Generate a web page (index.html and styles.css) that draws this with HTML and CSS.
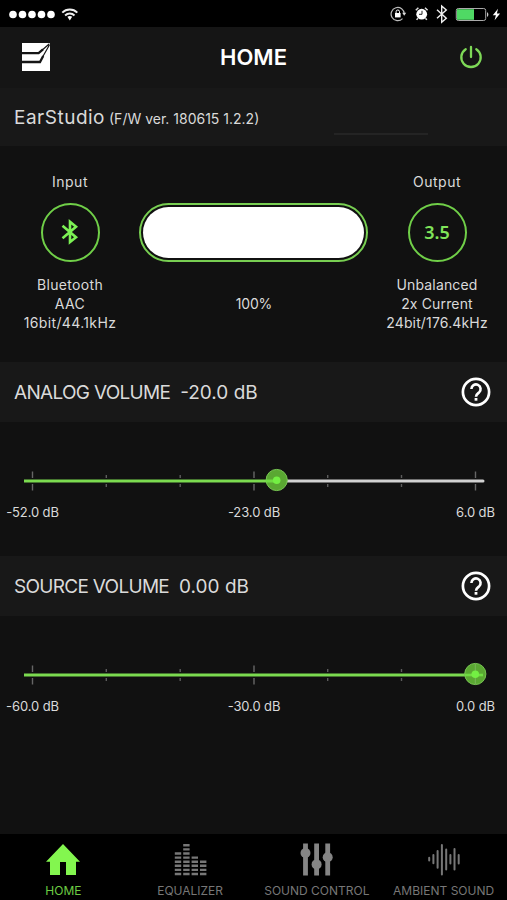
FILE: index.html
```html
<!DOCTYPE html>
<html lang="en">
<head>
  <meta charset="UTF-8">
  <title>EarStudio</title>
  <link rel="stylesheet" href="styles.css">
</head>
<body>
  <div class="status-bar">
    <svg width="72" height="27" viewBox="0 0 72 27">
      <g fill="#fff">
        <circle cx="6" cy="14.5" r="3.8"/>
        <circle cx="15.5" cy="14.5" r="3.8"/>
        <circle cx="25" cy="14.5" r="3.8"/>
        <circle cx="34.5" cy="14.5" r="3.8"/>
        <circle cx="44" cy="14.5" r="3.8"/>
        <path d="M60.4 16.8a4 4 0 0 1 4.8 0L62.8 20.6z"/>
      </g>
      <g fill="none" stroke="#eee" stroke-width="2">
        <path d="M55.3 12.6a10.6 10.6 0 0 1 15 0"/>
        <path d="M58.1 15.5a6.8 6.8 0 0 1 9.4 0"/>
      </g>
    </svg>
    <svg width="112" height="27" viewBox="390 0 112 27">
      <!-- rotation lock -->
      <path d="M402.5 18.6a6.6 6.6 0 1 1 1.8-4.6" fill="none" stroke="#bbb" stroke-width="1.2"/>
      <path d="M402.2 12.8h4l-2 3z" fill="#ddd"/>
      <rect x="395" y="13" width="5.6" height="4.4" fill="#fff"/>
      <path d="M396.1 13v-1.3a1.7 1.7 0 0 1 3.4 0V13" fill="none" stroke="#fff" stroke-width="1"/>
      <!-- alarm -->
      <circle cx="421.7" cy="14.2" r="5.4" fill="#fff"/>
      <path d="M415.8 10.3l2.6-2.5M427.6 10.3L425 7.8M417.9 18.2l-1.3 1.7M425.5 18.2l1.3 1.7" stroke="#ddd" stroke-width="1.5"/>
      <path d="M422 10.8v3.5h-3" fill="none" stroke="#222" stroke-width="1"/>
      <!-- bluetooth -->
      <path d="M437 9.8l9.3 8.4-4.6 4V6l4.6 3.9-9.3 8.4" fill="none" stroke="#eee" stroke-width="1.4"/>
      <!-- battery -->
      <rect x="456.3" y="8.5" width="29.4" height="12" rx="2" fill="none" stroke="#aaa" stroke-width="1"/>
      <rect x="457" y="9.2" width="17" height="10.6" fill="#4fd964"/>
      <path d="M487 12.3c1.8.6 1.8 4 0 4.6z" fill="#ccc"/>
      <path d="M498 8.7l-5.2 6.5h3.1l-1.3 5 5.5-6.7h-3.2z" fill="#fff"/>
    </svg>
  </div>

  <div class="header">
    <svg width="30" height="30" viewBox="0 0 30 30" fill="none" stroke="#151515">
      <rect x="1" y="1" width="28" height="28" fill="#fff" stroke="none"/>
      <path d="M1 11.2h16.6L22 7.4M1 20h18l3.2-6" stroke-width="2.3"/>
      <path d="M21 8.2l7.4-6.4M21.6 15l6.8-12" stroke-width="1.2"/>
    </svg>
    <h1 class="title">HOME</h1>
    <svg width="24" height="24" viewBox="0 0 24 24" fill="none" stroke="#7ed957" stroke-width="2.3" stroke-linecap="round">
      <path d="M6.7 4.2a9.7 9.7 0 1 0 10.6 0"/>
      <path d="M12 2v10"/>
    </svg>
  </div>

  <div class="device">
    <span class="device-name">EarStudio</span>
    <span class="device-version">(F/W ver. 180615 1.2.2)</span>
    <div class="device-line"></div>
  </div>

  <div class="signal">
    <div class="signal-end">
      <div class="signal-label">Input</div>
      <div class="ring">
        <svg width="18" height="26" viewBox="0 0 18 26" fill="none" stroke="#7cf254" stroke-width="2.6">
          <path d="M1.5 6.8L15 18.3l-6 4.7V2.8l6 4.9L1.5 19.2"/>
        </svg>
      </div>
      <div class="signal-info in">Bluetooth<br>AAC<br>16bit/44.1kHz</div>
    </div>
    <div class="battery">
      <div class="battery-frame"><div class="battery-fill"></div></div>
      <div class="battery-text">100%</div>
    </div>
    <div class="signal-end">
      <div class="signal-label">Output</div>
      <div class="ring">3.5</div>
      <div class="signal-info out">Unbalanced<br>2x Current<br>24bit/176.4kHz</div>
    </div>
  </div>

  <div class="volume analog">
    <div class="volume-head">
      <span class="volume-name">ANALOG VOLUME</span>
      <span class="volume-value">-20.0 dB</span>
      <svg class="help" width="30" height="30" viewBox="0 0 30 30" fill="none" stroke="#fff">
        <circle cx="15" cy="15" r="13.1" stroke-width="2.7"/>
        <path d="M10.4 12a4.6 4.6 0 1 1 7.6 3.5c-1.8 1.4-3 2.1-3 4.2" stroke-width="2.6"/>
        <path d="M15 21v2.7" stroke-width="2.8"/>
      </svg>
    </div>
    <svg class="slider" width="507" height="30" viewBox="0 0 507 30">
      <path d="M32.5 5.5v19M254 5.5v19M475.5 5.5v19" stroke="#666" stroke-width="1.4"/>
      <path d="M106.3 9v12M180.2 9v12M327.7 9v12M401.5 9v12" stroke="#5c5c5c" stroke-width="1.4"/>
      <path d="M23 15h462" stroke="#111" stroke-width="6"/>
      <path d="M277 15h206" stroke="#d2d2d2" stroke-width="3" stroke-linecap="round"/>
      <path d="M24 15h253" stroke="#7cdb50" stroke-width="3"/>
      <circle cx="276.7" cy="14" r="10.6" fill="#5aa832" stroke="#78c653" stroke-width="1"/>
      <path d="M266 15h11" stroke="#6fdc42" stroke-width="3"/>
      <circle cx="276.7" cy="14.2" r="3.8" fill="#73f043"/>
    </svg>
    <div class="scale"><span>-52.0 dB</span><span>-23.0 dB</span><span>6.0 dB</span></div>
  </div>

  <div class="volume source">
    <div class="volume-head">
      <span class="volume-name">SOURCE VOLUME</span>
      <span class="volume-value">0.00 dB</span>
      <svg class="help" width="30" height="30" viewBox="0 0 30 30" fill="none" stroke="#fff">
        <circle cx="15" cy="15" r="13.1" stroke-width="2.7"/>
        <path d="M10.4 12a4.6 4.6 0 1 1 7.6 3.5c-1.8 1.4-3 2.1-3 4.2" stroke-width="2.6"/>
        <path d="M15 21v2.7" stroke-width="2.8"/>
      </svg>
    </div>
    <svg class="slider" width="507" height="30" viewBox="0 0 507 30">
      <path d="M32.5 5.5v19M254 5.5v19" stroke="#666" stroke-width="1.4"/>
      <path d="M106.3 9v12M180.2 9v12M327.7 9v12M401.5 9v12" stroke="#5c5c5c" stroke-width="1.4"/>
      <path d="M23 15h450" stroke="#111" stroke-width="6"/>
      <path d="M24 15h451" stroke="#7cdb50" stroke-width="3"/>
      <circle cx="475.3" cy="14" r="10.6" fill="#5aa832" stroke="#78c653" stroke-width="1"/>
      <path d="M475.3 4v20" stroke="#79b55a" stroke-width="1"/>
      <path d="M465 15h18" stroke="#6fdc42" stroke-width="2.6"/>
      <circle cx="475.3" cy="14.2" r="3.8" fill="#73f043"/>
    </svg>
    <div class="scale"><span>-60.0 dB</span><span>-30.0 dB</span><span>0.0 dB</span></div>
  </div>

  <div class="tabs">
    <div class="tab active">
      <svg width="36" height="34" viewBox="0 0 36 34" fill="#83f64f">
        <path d="M18 1L35 18.8h-4V32H21V19h-6v13H5V18.8H1z"/>
      </svg>
      <span>HOME</span>
    </div>
    <div class="tab">
      <svg width="34" height="34" viewBox="0 0 34 34" fill="none" stroke="#777" stroke-width="6.4" stroke-dasharray="2.4 1.7">
        <path d="M5 32.2V8.5"/>
        <path d="M13.4 32.2V.5"/>
        <path d="M21.8 32.2V12.5"/>
        <path d="M30.2 32.2V16.8"/>
      </svg>
      <span>EQUALIZER</span>
    </div>
    <div class="tab">
      <svg width="34" height="34" viewBox="0 0 34 34">
        <path d="M5.5 .5v32M16.6 .5v32M27.7 .5v32" stroke="#858585" stroke-width="4.8"/>
        <g fill="#858585">
          <circle cx="5.5" cy="10" r="5"/>
          <circle cx="16.6" cy="21.4" r="5"/>
          <circle cx="27.7" cy="14.2" r="5"/>
        </g>
      </svg>
      <span>SOUND CONTROL</span>
    </div>
    <div class="tab">
      <svg width="34" height="34" viewBox="0 0 34 34" stroke="#777" stroke-width="2" stroke-linecap="round">
        <path d="M2.2 14.8v2.8M6.4 12v8.2M10.6 8v16.8M14.9 2v29.5M19.2 6.6v20M23.4 12v8.4M27.5 6v20.5M31.7 12v8.4"/>
      </svg>
      <span>AMBIENT SOUND</span>
    </div>
  </div>
</body>
</html>
```
FILE: styles.css
```css
* {
  box-sizing: border-box;
}

body {
  margin: 0;
  width: 507px;
  height: 900px;
  overflow: hidden;
  display: flex;
  flex-direction: column;
  background: #111;
  color: #dadada;
  font-family: Inter, "Liberation Sans", sans-serif;
}

svg {
  display: block;
  flex-shrink: 0;
}

.status-bar {
  height: 27px;
  padding: 0 5px 0 7px;
  display: flex;
  justify-content: space-between;
  background: #000;
}

.header {
  height: 61px;
  padding: 0 24px 2px 21px;
  display: flex;
  align-items: center;
  justify-content: space-between;
  background: #151515;
}

.title {
  margin: 0;
  padding: 1px 3px 0 0;
  font-size: 22px;
  font-weight: 600;
  color: #fff;
}

.device {
  height: 58px;
  padding-left: 14px;
  display: flex;
  align-items: baseline;
  line-height: 60px;
  background: #181818;
}

.device-name {
  font-size: 19px;
  letter-spacing: 0.5px;
}

.device-version {
  margin-left: 4px;
  font-size: 14px;
}

.device-line {
  width: 94px;
  height: 2px;
  margin: 0 0 11px 75px;
  align-self: flex-end;
  background: #242424;
}

.signal {
  height: 216px;
  padding: 0 3px;
  display: flex;
  justify-content: space-between;
  font-size: 14px;
  letter-spacing: 0.5px;
  text-align: center;
}

.signal-end {
  width: 134px;
  padding-top: 25px;
  display: flex;
  flex-direction: column;
  align-items: center;
}

.signal-label {
  padding-top: 1px;
  line-height: 20px;
}

.ring {
  width: 59px;
  height: 59px;
  margin-top: 11px;
  padding-bottom: 2px;
  display: flex;
  align-items: center;
  justify-content: center;
  border: 2px solid #70cf48;
  border-radius: 50%;
  color: #80e45a;
  font: 600 18px "Noto Sans", sans-serif;
  letter-spacing: -0.1px;
}

.signal-info {
  margin-top: 14px;
  line-height: 18.8px;
}

.in {
  letter-spacing: 0.35px;
}

.out {
  letter-spacing: 0.15px;
}

.battery {
  width: 229px;
  padding-top: 57px;
}

.battery-frame {
  height: 59px;
  padding: 2px;
  border: 2px solid #78cf52;
  border-radius: 30px;
}

.battery-fill {
  height: 51px;
  border-radius: 26px;
  background: #fff;
}

.battery-text {
  margin-top: 32px;
  padding-left: 1px;
  line-height: 20px;
  letter-spacing: -0.2px;
}

.analog {
  height: 194px;
}

.source {
  height: 278px;
}

.volume-head {
  height: 60px;
  padding: 0 16px 0 14px;
  display: flex;
  align-items: center;
  background: #181818;
}

.volume-name,
.volume-value {
  padding-top: 1px;
  font-size: 19px;
}

.volume-name {
  letter-spacing: -0.7px;
}

.volume-value {
  margin-left: 10px;
}

.help {
  margin-left: auto;
}

.slider {
  margin-top: 44px;
}

.scale {
  padding: 7px 1px 0 2px;
  display: flex;
  justify-content: space-between;
  font-size: 13px;
  letter-spacing: -0.1px;
  line-height: 18px;
  text-align: center;
}

.scale span {
  width: 61px;
}

.tabs {
  height: 66px;
  padding-top: 9px;
  display: grid;
  grid-template-columns: repeat(4, 1fr);
  background: #000;
  color: #777;
  font-size: 12px;
}

.tab {
  display: flex;
  flex-direction: column;
  align-items: center;
  line-height: 16px;
  white-space: nowrap;
}

.tab span {
  margin-top: 6px;
}

.active {
  color: #6dcc43;
}
```
